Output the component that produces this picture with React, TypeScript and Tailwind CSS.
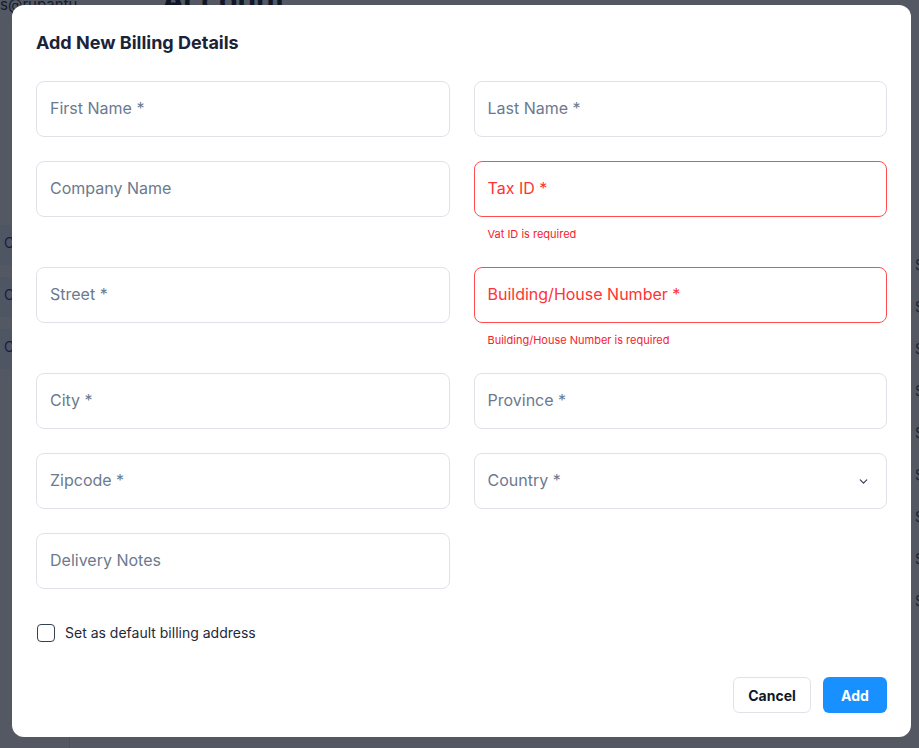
import { ChevronDown } from "lucide-react";

type Field = {
  label: string
  error?: string
  select?: boolean
}

const fields: (Field | null)[] = [
  { label: "First Name *" },
  { label: "Last Name *" },
  { label: "Company Name" },
  { label: "Tax ID *", error: "Vat ID is required" },
  { label: "Street *" },
  { label: "Building/House Number *", error: "Building/House Number is required" },
  { label: "City *" },
  { label: "Province *" },
  { label: "Zipcode *" },
  { label: "Country *", select: true },
  { label: "Delivery Notes" },
  null,
]

function Input({ field }: { field: Field }) {
  const invalid = !!field.error
  return (
    <div className="flex flex-col">
      <div
        className={
          invalid
            ? "flex h-14 items-center rounded-lg border border-[#ff4d4f] px-[13px] text-[16px] leading-6 text-[#ff3333]"
            : "flex h-14 items-center rounded-lg border border-[#dfe3e8] px-[13px] text-[16px] leading-6 text-[#6b7a8f]"
        }
      >
        <span className="-mt-[2px] flex-1">{field.label}</span>
        {field.select && <ChevronDown size={13} strokeWidth={2.2} className="mr-[3px] text-[#334155]" />}
      </div>
      {field.error && (
        <p className="mt-2 pl-[14px] text-[11px] leading-[18px] text-[#f5222d]">{field.error}</p>
      )}
    </div>
  )
}

export default function App() {
  return (
    <div className="relative h-[748px] w-[919px] overflow-hidden bg-white font-['Inter','Liberation_Sans',sans-serif]">
      {/* page behind the modal */}
      <div className="flex h-full">
        <div className="w-[70px] border-r border-gray-200">
          <div className="-mt-[6px] whitespace-nowrap text-[15px] text-gray-800">s@rupantu...</div>
          <div className="mt-[208px] flex flex-col gap-[12px]">
            <div className="h-10 bg-indigo-50 px-1 pt-2 text-sm text-indigo-900">Co</div>
            <div className="h-10 bg-indigo-50 px-1 pt-2 text-sm text-indigo-900">Co</div>
            <div className="h-10 bg-indigo-50 px-1 pt-2 text-sm text-indigo-900">Co</div>
          </div>
        </div>
        <div className="flex-1 pl-[92px]">
          <div className="-mt-[22px] text-[30px] font-bold text-gray-900">Account</div>
        </div>
        <div className="flex w-[4px] flex-col gap-[22px] pt-[255px] text-sm text-gray-700">
          {Array.from({ length: 9 }).map((_, i) => (
            <span key={i}>S</span>
          ))}
        </div>
      </div>

      {/* overlay + modal */}
      <div className="absolute inset-0 flex bg-[rgba(17,24,39,0.72)] pl-[12px] pt-[5px]">
        <div className="flex h-[732px] w-[899px] flex-col rounded-xl bg-white p-6">
          <h2 className="text-[18px] font-bold leading-7 text-[#1a2338]">Add New Billing Details</h2>

          <div className="mt-6 grid grid-cols-2 gap-x-6 gap-y-6">
            {fields.map((f, i) => (f ? <Input key={i} field={f} /> : <div key={i} />))}
          </div>

          <label className="mt-[34px] flex items-center gap-[10px]">
            <span className="ml-px h-[18px] w-[18px] rounded-[4px] border-[1.5px] border-[#334155]" />
            <span className="text-[14px] leading-5 text-[#1e293b]">Set as default billing address</span>
          </label>

          <div className="mt-[34px] flex justify-end gap-3">
            <button className="h-[36px] w-[78px] rounded-md border border-[#dfe3e8] bg-white text-[14px] font-bold text-[#111827]">
              Cancel
            </button>
            <button className="h-[36px] w-[64px] rounded-md bg-[#1890ff] text-[14px] font-bold text-white">
              Add
            </button>
          </div>
        </div>
      </div>
    </div>
  )
}
